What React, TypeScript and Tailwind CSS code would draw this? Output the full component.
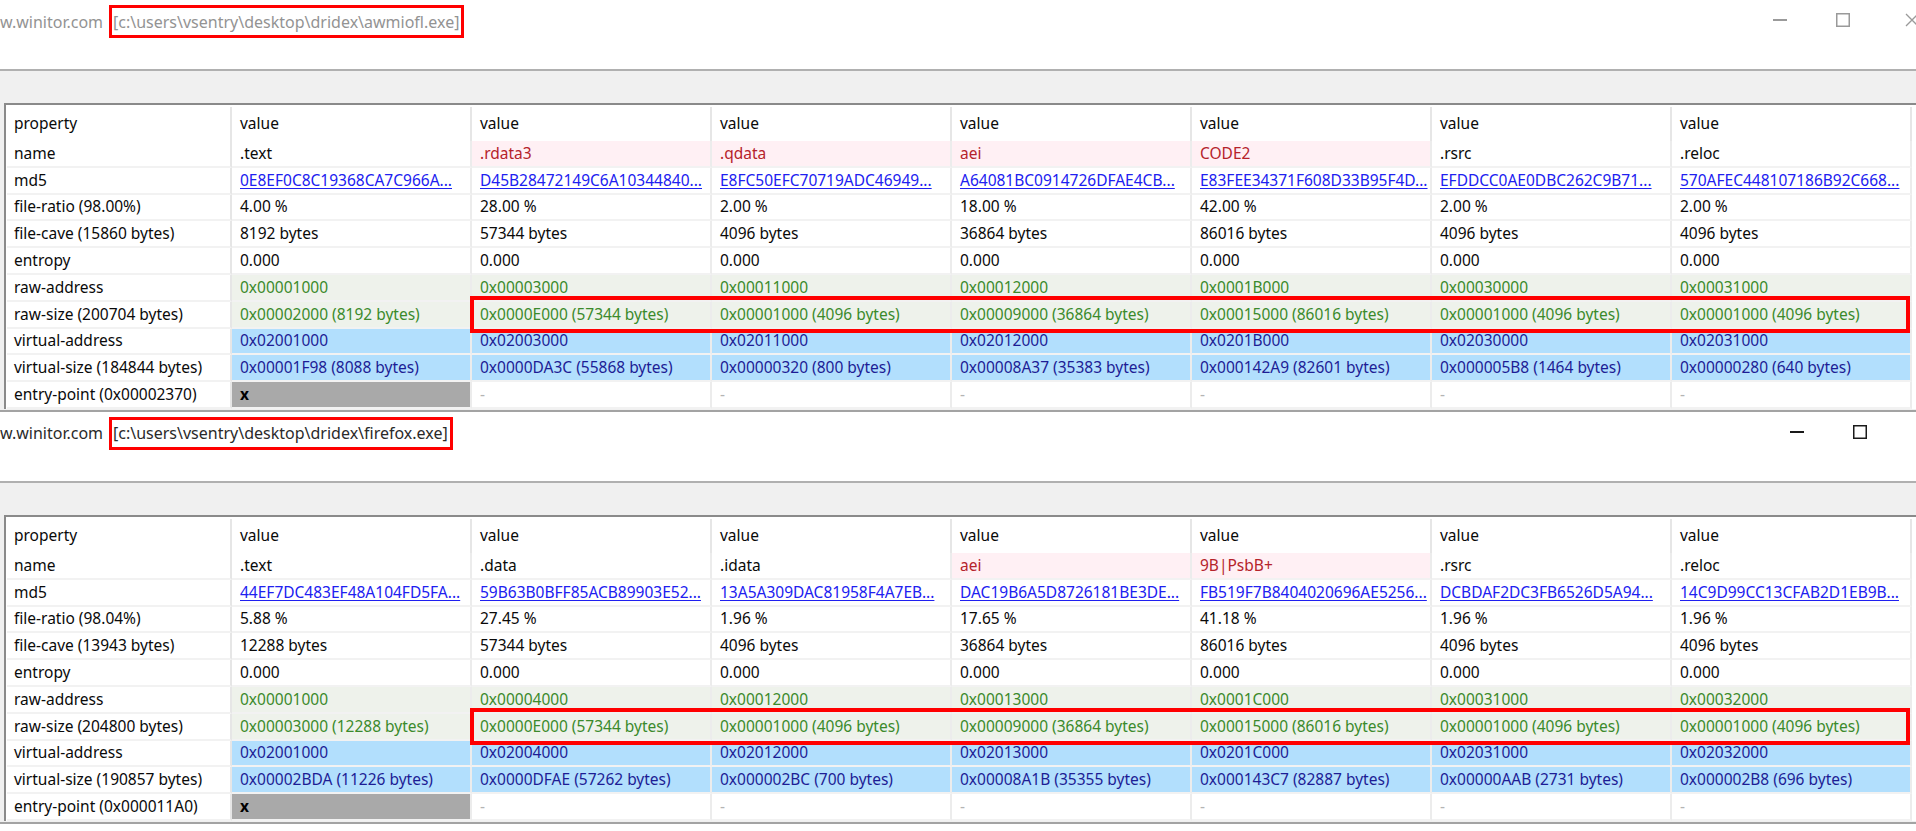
type RowKind = 'plain' | 'name' | 'link' | 'raw' | 'virt' | 'entry';

interface RowData {
  prop: string;
  kind: RowKind;
  values: string[];
  pink?: boolean[];
  highlight?: boolean;
}

interface WindowData {
  file: string;
  active: boolean;
  rows: RowData[];
}

const zero = ['0.000', '0.000', '0.000', '0.000', '0.000', '0.000', '0.000'];
const dashes = ['x', '-', '-', '-', '-', '-', '-'];

const windows: WindowData[] = [
  {
    file: 'c:\\users\\vsentry\\desktop\\dridex\\awmiofl.exe',
    active: false,
    rows: [
      { prop: 'name', kind: 'name', values: ['.text', '.rdata3', '.qdata', 'aei', 'CODE2', '.rsrc', '.reloc'], pink: [false, true, true, true, true, false, false] },
      { prop: 'md5', kind: 'link', values: ['0E8EF0C8C19368CA7C966A...', 'D45B28472149C6A10344840...', 'E8FC50EFC70719ADC46949...', 'A64081BC0914726DFAE4CB...', 'E83FEE34371F608D33B95F4D...', 'EFDDCC0AE0DBC262C9B71...', '570AFEC448107186B92C668...'] },
      { prop: 'file-ratio (98.00%)', kind: 'plain', values: ['4.00 %', '28.00 %', '2.00 %', '18.00 %', '42.00 %', '2.00 %', '2.00 %'] },
      { prop: 'file-cave (15860 bytes)', kind: 'plain', values: ['8192 bytes', '57344 bytes', '4096 bytes', '36864 bytes', '86016 bytes', '4096 bytes', '4096 bytes'] },
      { prop: 'entropy', kind: 'plain', values: zero },
      { prop: 'raw-address', kind: 'raw', values: ['0x00001000', '0x00003000', '0x00011000', '0x00012000', '0x0001B000', '0x00030000', '0x00031000'] },
      { prop: 'raw-size (200704 bytes)', kind: 'raw', highlight: true, values: ['0x00002000 (8192 bytes)', '0x0000E000 (57344 bytes)', '0x00001000 (4096 bytes)', '0x00009000 (36864 bytes)', '0x00015000 (86016 bytes)', '0x00001000 (4096 bytes)', '0x00001000 (4096 bytes)'] },
      { prop: 'virtual-address', kind: 'virt', values: ['0x02001000', '0x02003000', '0x02011000', '0x02012000', '0x0201B000', '0x02030000', '0x02031000'] },
      { prop: 'virtual-size (184844 bytes)', kind: 'virt', values: ['0x00001F98 (8088 bytes)', '0x0000DA3C (55868 bytes)', '0x00000320 (800 bytes)', '0x00008A37 (35383 bytes)', '0x000142A9 (82601 bytes)', '0x000005B8 (1464 bytes)', '0x00000280 (640 bytes)'] },
      { prop: 'entry-point (0x00002370)', kind: 'entry', values: dashes },
    ],
  },
  {
    file: 'c:\\users\\vsentry\\desktop\\dridex\\firefox.exe',
    active: true,
    rows: [
      { prop: 'name', kind: 'name', values: ['.text', '.data', '.idata', 'aei', '9B|PsbB+', '.rsrc', '.reloc'], pink: [false, false, false, true, true, false, false] },
      { prop: 'md5', kind: 'link', values: ['44EF7DC483EF48A104FD5FA...', '59B63B0BFF85ACB89903E52...', '13A5A309DAC81958F4A7EB...', 'DAC19B6A5D8726181BE3DE...', 'FB519F7B8404020696AE5256...', 'DCBDAF2DC3FB6526D5A94...', '14C9D99CC13CFAB2D1EB9B...'] },
      { prop: 'file-ratio (98.04%)', kind: 'plain', values: ['5.88 %', '27.45 %', '1.96 %', '17.65 %', '41.18 %', '1.96 %', '1.96 %'] },
      { prop: 'file-cave (13943 bytes)', kind: 'plain', values: ['12288 bytes', '57344 bytes', '4096 bytes', '36864 bytes', '86016 bytes', '4096 bytes', '4096 bytes'] },
      { prop: 'entropy', kind: 'plain', values: zero },
      { prop: 'raw-address', kind: 'raw', values: ['0x00001000', '0x00004000', '0x00012000', '0x00013000', '0x0001C000', '0x00031000', '0x00032000'] },
      { prop: 'raw-size (204800 bytes)', kind: 'raw', highlight: true, values: ['0x00003000 (12288 bytes)', '0x0000E000 (57344 bytes)', '0x00001000 (4096 bytes)', '0x00009000 (36864 bytes)', '0x00015000 (86016 bytes)', '0x00001000 (4096 bytes)', '0x00001000 (4096 bytes)'] },
      { prop: 'virtual-address', kind: 'virt', values: ['0x02001000', '0x02004000', '0x02012000', '0x02013000', '0x0201C000', '0x02031000', '0x02032000'] },
      { prop: 'virtual-size (190857 bytes)', kind: 'virt', values: ['0x00002BDA (11226 bytes)', '0x0000DFAE (57262 bytes)', '0x000002BC (700 bytes)', '0x00008A1B (35355 bytes)', '0x000143C7 (82887 bytes)', '0x00000AAB (2731 bytes)', '0x000002B8 (696 bytes)'] },
      { prop: 'entry-point (0x000011A0)', kind: 'entry', values: dashes },
    ],
  },
];

export default function App() {
  return (
    <div className="w-[1916px] h-[831px] overflow-hidden bg-white font-['Noto_Sans',sans-serif] text-[15.5px] text-[#0a0a0a]">
      {windows.map((w) => (
        <SectionWindow key={w.file} {...w} />
      ))}
    </div>
  );
}

function SectionWindow({ file, active, rows }: WindowData) {
  const ink = active ? 'text-[#2a2a2a]' : 'text-[#939393]';
  return (
    <div className="bg-[#f0f0f0]">
      <div className="h-[69px] bg-white flex items-start">
        <div className={`mt-[5px] h-[33px] flex items-center text-[16px] whitespace-nowrap ${ink}`}>
          <span className="w-[109px] overflow-hidden">w.winitor.com</span>
          <span className="h-[33px] flex items-center border-[3px] border-[#ff0000] pl-[1px] pr-[2px]">[{file}]</span>
        </div>
        <WindowControls active={active} />
      </div>
      <div className="h-[2px] bg-[#b0b0b0]" />
      <div className="h-[32px] bg-[#f0f0f0]" />
      <div className="ml-[4px] border-t-2 border-l-2 border-[#8a8a8a] pt-[2px] pl-[1px] bg-white">
        <div className="flex h-[34px]">
          <div className="w-[225px] shrink-0 pl-[7px] flex items-center border-r-2 border-[#e6e6e6]">property</div>
          {Array.from({ length: 7 }).map((_, i) => (
            <div key={i} className="w-[240px] shrink-0 pl-[8px] flex items-center border-r-2 border-[#e6e6e6]">
              value
            </div>
          ))}
        </div>
        {rows.map((row) => (
          <TableRow key={row.prop} {...row} />
        ))}
      </div>
      <div className="h-[1px] bg-[#f0f0f0]" />
      <div className="h-[2px] bg-[#a3a3a3]" />
    </div>
  );
}

function WindowControls({ active }: { active: boolean }) {
  const stroke = active ? '#1a1a1a' : '#9a9a9a';
  return (
    <div className={`ml-auto mt-[13px] flex items-center h-[14px] ${active ? 'mr-[-20px]' : 'mr-[-3px]'}`}>
      <div className="w-[14px] h-[1.5px]" style={{ background: stroke }} />
      <svg width="14" height="14" viewBox="0 0 14 14" className="ml-[49px]">
        <rect x="0.75" y="0.75" width="12.5" height="12.5" fill="none" stroke={stroke} strokeWidth="1.5" />
      </svg>
      <svg width="14" height="14" viewBox="0 0 14 14" className="ml-[55px]">
        <path d="M1 1 L13 13 M13 1 L1 13" stroke={stroke} strokeWidth="1.3" />
      </svg>
    </div>
  );
}

function TableRow({ prop, kind, values, pink, highlight }: RowData) {
  return (
    <div className="relative flex h-[26.8px]">
      <div className="w-[225px] shrink-0 pl-[7px] flex items-center whitespace-nowrap border-r-2 border-r-[#e6e6e6] border-b-2 border-b-[#f2f2f2]">
        {prop}
      </div>
      {values.map((v, i) => {
        let cls = 'bg-white';
        if (kind === 'name' && pink?.[i]) cls = 'bg-[#fff0f4] text-[#b5232b]';
        if (kind === 'raw') cls = 'bg-[#eef2eb] text-[#3b8a2c]';
        if (kind === 'virt') cls = 'bg-[#b2dffd] text-[#1d1d95]';
        if (kind === 'entry') cls = i === 0 ? 'bg-[#a9a9a9] font-bold text-black' : 'bg-white text-[#b4b4b4]';
        return (
          <div
            key={i}
            className={`w-[240px] shrink-0 pl-[8px] flex items-center whitespace-nowrap border-r-2 border-r-[#ececec] border-b-2 border-b-[#f2f2f2] ${cls}`}
          >
            {kind === 'link' ? <span className="text-[#2020f0] underline underline-offset-2">{v}</span> : v}
          </div>
        );
      })}
      {highlight && (
        <div className="absolute z-10 left-[463px] top-[-6px] w-[1440px] h-[37px] border-4 border-[#ff0000] pointer-events-none" />
      )}
    </div>
  );
}
